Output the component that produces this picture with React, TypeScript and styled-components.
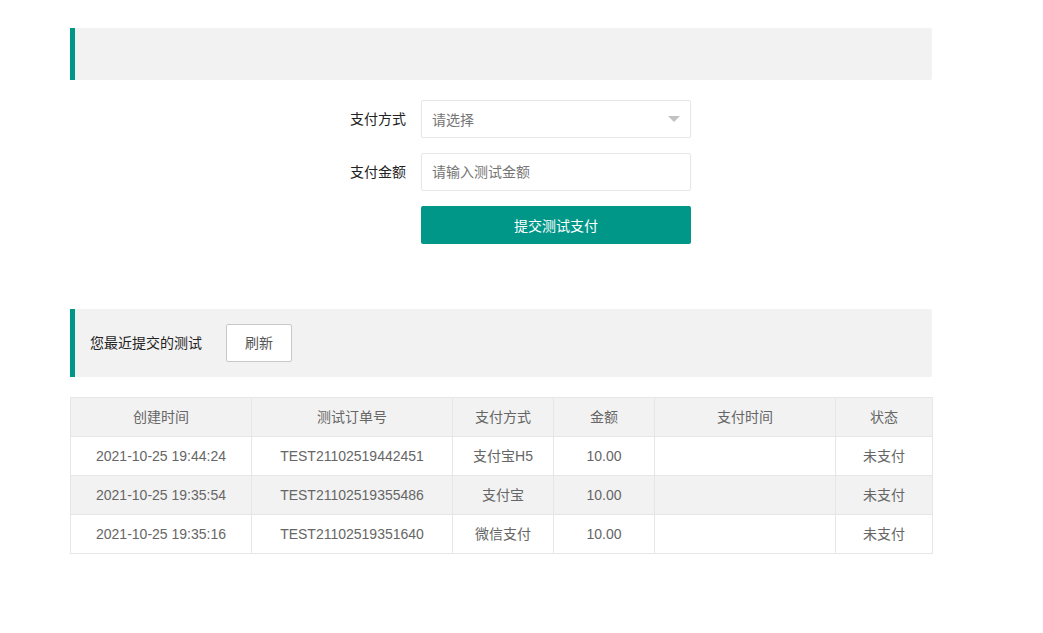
import styled, { createGlobalStyle } from 'styled-components'

const GlobalStyle = createGlobalStyle`
  html, body {
    margin: 0;
    padding: 0;
    background: #fff;
  }
  body {
    font-family: "Liberation Sans", "Noto Sans CJK SC", sans-serif;
    font-size: 14px;
    color: #333;
  }
  * {
    box-sizing: border-box;
  }
`

type Order = {
  created: string
  orderNo: string
  method: string
  amount: string
  paidAt: string
  status: string
}

const orders: Order[] = [
  { created: '2021-10-25 19:44:24', orderNo: 'TEST21102519442451', method: '支付宝H5', amount: '10.00', paidAt: '', status: '未支付' },
  { created: '2021-10-25 19:35:54', orderNo: 'TEST21102519355486', method: '支付宝', amount: '10.00', paidAt: '', status: '未支付' },
  { created: '2021-10-25 19:35:16', orderNo: 'TEST21102519351640', method: '微信支付', amount: '10.00', paidAt: '', status: '未支付' },
]

const columns = [
  { title: '创建时间', width: 181 },
  { title: '测试订单号', width: 201 },
  { title: '支付方式', width: 101 },
  { title: '金额', width: 101 },
  { title: '支付时间', width: 181 },
  { title: '状态', width: 97 },
]

const App = () => {
  return (
    <Page>
      <GlobalStyle />
      <Quote />
      <Form>
        <FormItem>
          <Label>支付方式</Label>
          <SelectBox>
            <Placeholder>请选择</Placeholder>
            <Edge />
          </SelectBox>
        </FormItem>
        <FormItem>
          <Label>支付金额</Label>
          <Input placeholder="请输入测试金额" />
        </FormItem>
        <FormItem>
          <Label />
          <SubmitButton>提交测试支付</SubmitButton>
        </FormItem>
      </Form>
      <Quote $tall>
        <QuoteTitle>您最近提交的测试</QuoteTitle>
        <PrimaryButton>刷新</PrimaryButton>
      </Quote>
      <Table>
        <colgroup>
          {columns.map((c) => (
            <col key={c.title} width={c.width} />
          ))}
        </colgroup>
        <thead>
          <tr>
            {columns.map((c) => (
              <Th key={c.title}>{c.title}</Th>
            ))}
          </tr>
        </thead>
        <tbody>
          {orders.map((o, i) => (
            <Row key={o.orderNo} $even={i % 2 === 1}>
              <Td>{o.created}</Td>
              <Td>{o.orderNo}</Td>
              <Td>{o.method}</Td>
              <Td>{o.amount}</Td>
              <Td>{o.paidAt}</Td>
              <Td>{o.status}</Td>
            </Row>
          ))}
        </tbody>
      </Table>
    </Page>
  )
}

const Page = styled.div`
  width: 862px;
  margin-left: 70px;
  padding-top: 28px;
`

const Quote = styled.div<{ $tall?: boolean }>`
  display: flex;
  align-items: center;
  min-height: ${(p) => (p.$tall ? '68px' : '52px')};
  padding: 15px;
  margin-bottom: 10px;
  background-color: #f2f2f2;
  border-left: 5px solid #009688;
  border-radius: 0 2px 2px 0;
  line-height: 22px;
`

const QuoteTitle = styled.span`
  color: #222;
  font-size: 14px;
  margin-right: 24px;
`

const Form = styled.div`
  display: flex;
  flex-direction: column;
  align-items: center;
  padding-top: 10px;
  margin-bottom: 65px;
`

const FormItem = styled.div`
  display: flex;
  width: 380px;
  margin-bottom: 15px;
  &:last-child {
    margin-bottom: 0;
  }
`

const Label = styled.label`
  width: 110px;
  padding: 9px 15px;
  line-height: 20px;
  text-align: right;
  color: #222;
`

const SelectBox = styled.div`
  position: relative;
  display: flex;
  align-items: center;
  width: 270px;
  height: 38px;
  padding-left: 10px;
  border: 1px solid #e6e6e6;
  border-radius: 2px;
  background: #fff;
`

const Placeholder = styled.span`
  color: #757575;
`

const Edge = styled.i`
  position: absolute;
  right: 10px;
  top: 50%;
  margin-top: -3px;
  width: 0;
  height: 0;
  border-style: solid;
  border-width: 6px 6px 0 6px;
  border-color: #c2c2c2 transparent transparent transparent;
`

const Input = styled.input`
  width: 270px;
  height: 38px;
  padding-left: 10px;
  border: 1px solid #e6e6e6;
  border-radius: 2px;
  font: inherit;
  color: #333;
  outline: none;
  &::placeholder {
    color: #757575;
  }
`

const SubmitButton = styled.button`
  width: 270px;
  height: 38px;
  border: none;
  border-radius: 2px;
  background-color: #009688;
  color: #fff;
  font: inherit;
  cursor: pointer;
`

const PrimaryButton = styled.button`
  height: 38px;
  padding: 0 18px;
  border: 1px solid #c9c9c9;
  border-radius: 2px;
  background: #fff;
  color: #555;
  font: inherit;
  cursor: pointer;
`

const Table = styled.table`
  width: 100%;
  margin: 20px 0 10px;
  border-collapse: collapse;
  border-spacing: 0;
  table-layout: fixed;
  color: #666;
`

const Th = styled.th`
  padding: 9px 15px;
  min-height: 20px;
  line-height: 20px;
  font-weight: 400;
  text-align: center;
  background-color: #f2f2f2;
  border: 1px solid #e6e6e6;
`

const Row = styled.tr<{ $even?: boolean }>`
  background-color: ${(p) => (p.$even ? '#f2f2f2' : '#fff')};
`

const Td = styled.td`
  padding: 9px 15px;
  height: 39px;
  line-height: 20px;
  text-align: center;
  border: 1px solid #e6e6e6;
`

export default App
